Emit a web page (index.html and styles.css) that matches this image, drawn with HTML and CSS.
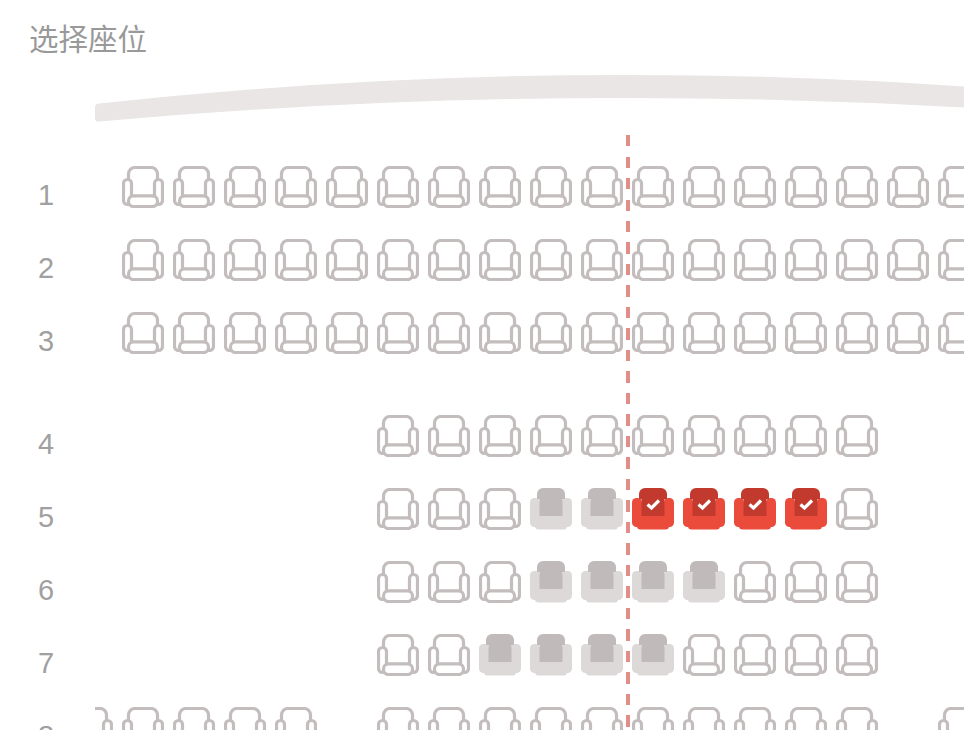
FILE: index.html
```html
<!DOCTYPE html>
<html lang="zh-CN">
<head>
  <meta charset="UTF-8" />
  <meta name="viewport" content="width=device-width, initial-scale=1.0" />
  <title>选择座位</title>
  <link rel="stylesheet" href="styles.css">
</head>
<body>
  <svg class="defs" xmlns="http://www.w3.org/2000/svg">
    <symbol id="free" viewBox="0 0 42 42">
      <g fill="#fff" stroke="#c3bdbd" stroke-width="3.200">
        <path d="M6.500 14V8a6.500 6.500 0 0 1 6.500-6.500h16a6.500 6.500 0 0 1 6.500 6.500v6" />
        <rect x="1.500" y="13.500" width="8" height="25" rx="4" />
        <rect x="32.500" y="13.500" width="8" height="25" rx="4" />
        <rect x="6.500" y="29.800" width="29" height="10.800" rx="5" />
      </g>
    </symbol>
    <symbol id="taken" viewBox="0 0 42 42">
      <rect x="0" y="10" width="10" height="29" rx="4.500" fill="#dcd9d8" />
      <rect x="32" y="10" width="10" height="29" rx="4.500" fill="#dcd9d8" />
      <rect x="5" y="28" width="32" height="13.500" rx="3.500" fill="#dcd9d8" />
      <path d="M7 11V6a6 6 0 0 1 6-6h16a6 6 0 0 1 6 6v5h-2.500v17h-23V11z" fill="#c0baba" />
    </symbol>
    <symbol id="picked" viewBox="0 0 42 42">
      <rect x="0" y="10" width="10" height="29" rx="4.500" fill="#ea4b3a" />
      <rect x="32" y="10" width="10" height="29" rx="4.500" fill="#ea4b3a" />
      <rect x="5" y="28" width="32" height="13.500" rx="3.500" fill="#ea4b3a" />
      <path d="M7 11V6a6 6 0 0 1 6-6h16a6 6 0 0 1 6 6v5h-2.500v17h-23V11z" fill="#c23a2d" />
      <path d="M15.500 16.500l4 3.500 7.500-7.500" fill="none" stroke="#fff" stroke-width="3.200" />
    </symbol>
  </svg>

  <h1 class="title">选择座位</h1>

  <svg class="screen" viewBox="95 74 869 50" xmlns="http://www.w3.org/2000/svg">
    <path d="M99 103.600Q628 46 1161 104V122Q628 74 99 121.600Q95 122 95 118V107.500Q95 104 99 103.600Z" fill="#e9e6e5" />
  </svg>

  <div class="map">
    <div class="aisle"></div>

    <div class="row">
      <div class="row-num">1</div>
      <div class="seats">
        <span class="blank"></span>
        <svg class="seat"><use href="#free" /></svg><svg class="seat"><use href="#free" /></svg><svg class="seat"><use href="#free" /></svg><svg class="seat"><use href="#free" /></svg><svg class="seat"><use href="#free" /></svg><svg class="seat"><use href="#free" /></svg><svg class="seat"><use href="#free" /></svg><svg class="seat"><use href="#free" /></svg><svg class="seat"><use href="#free" /></svg><svg class="seat"><use href="#free" /></svg><svg class="seat"><use href="#free" /></svg><svg class="seat"><use href="#free" /></svg><svg class="seat"><use href="#free" /></svg><svg class="seat"><use href="#free" /></svg><svg class="seat"><use href="#free" /></svg><svg class="seat"><use href="#free" /></svg><svg class="seat"><use href="#free" /></svg>
      </div>
    </div>

    <div class="row">
      <div class="row-num">2</div>
      <div class="seats">
        <span class="blank"></span>
        <svg class="seat"><use href="#free" /></svg><svg class="seat"><use href="#free" /></svg><svg class="seat"><use href="#free" /></svg><svg class="seat"><use href="#free" /></svg><svg class="seat"><use href="#free" /></svg><svg class="seat"><use href="#free" /></svg><svg class="seat"><use href="#free" /></svg><svg class="seat"><use href="#free" /></svg><svg class="seat"><use href="#free" /></svg><svg class="seat"><use href="#free" /></svg><svg class="seat"><use href="#free" /></svg><svg class="seat"><use href="#free" /></svg><svg class="seat"><use href="#free" /></svg><svg class="seat"><use href="#free" /></svg><svg class="seat"><use href="#free" /></svg><svg class="seat"><use href="#free" /></svg><svg class="seat"><use href="#free" /></svg>
      </div>
    </div>

    <div class="row">
      <div class="row-num">3</div>
      <div class="seats">
        <span class="blank"></span>
        <svg class="seat"><use href="#free" /></svg><svg class="seat"><use href="#free" /></svg><svg class="seat"><use href="#free" /></svg><svg class="seat"><use href="#free" /></svg><svg class="seat"><use href="#free" /></svg><svg class="seat"><use href="#free" /></svg><svg class="seat"><use href="#free" /></svg><svg class="seat"><use href="#free" /></svg><svg class="seat"><use href="#free" /></svg><svg class="seat"><use href="#free" /></svg><svg class="seat"><use href="#free" /></svg><svg class="seat"><use href="#free" /></svg><svg class="seat"><use href="#free" /></svg><svg class="seat"><use href="#free" /></svg><svg class="seat"><use href="#free" /></svg><svg class="seat"><use href="#free" /></svg><svg class="seat"><use href="#free" /></svg>
      </div>
    </div>

    <div class="row row-break">
      <div class="row-num">4</div>
      <div class="seats">
        <span class="blank"></span><span class="blank"></span><span class="blank"></span><span class="blank"></span><span class="blank"></span><span class="blank"></span>
        <svg class="seat"><use href="#free" /></svg><svg class="seat"><use href="#free" /></svg><svg class="seat"><use href="#free" /></svg><svg class="seat"><use href="#free" /></svg><svg class="seat"><use href="#free" /></svg><svg class="seat"><use href="#free" /></svg><svg class="seat"><use href="#free" /></svg><svg class="seat"><use href="#free" /></svg><svg class="seat"><use href="#free" /></svg><svg class="seat"><use href="#free" /></svg>
      </div>
    </div>

    <div class="row">
      <div class="row-num">5</div>
      <div class="seats">
        <span class="blank"></span><span class="blank"></span><span class="blank"></span><span class="blank"></span><span class="blank"></span><span class="blank"></span>
        <svg class="seat"><use href="#free" /></svg><svg class="seat"><use href="#free" /></svg><svg class="seat"><use href="#free" /></svg>
        <svg class="seat"><use href="#taken" /></svg><svg class="seat"><use href="#taken" /></svg>
        <svg class="seat"><use href="#picked" /></svg><svg class="seat"><use href="#picked" /></svg><svg class="seat"><use href="#picked" /></svg><svg class="seat"><use href="#picked" /></svg>
        <svg class="seat"><use href="#free" /></svg>
      </div>
    </div>

    <div class="row">
      <div class="row-num">6</div>
      <div class="seats">
        <span class="blank"></span><span class="blank"></span><span class="blank"></span><span class="blank"></span><span class="blank"></span><span class="blank"></span>
        <svg class="seat"><use href="#free" /></svg><svg class="seat"><use href="#free" /></svg><svg class="seat"><use href="#free" /></svg>
        <svg class="seat"><use href="#taken" /></svg><svg class="seat"><use href="#taken" /></svg><svg class="seat"><use href="#taken" /></svg><svg class="seat"><use href="#taken" /></svg>
        <svg class="seat"><use href="#free" /></svg><svg class="seat"><use href="#free" /></svg><svg class="seat"><use href="#free" /></svg>
      </div>
    </div>

    <div class="row">
      <div class="row-num">7</div>
      <div class="seats">
        <span class="blank"></span><span class="blank"></span><span class="blank"></span><span class="blank"></span><span class="blank"></span><span class="blank"></span>
        <svg class="seat"><use href="#free" /></svg><svg class="seat"><use href="#free" /></svg>
        <svg class="seat"><use href="#taken" /></svg><svg class="seat"><use href="#taken" /></svg><svg class="seat"><use href="#taken" /></svg><svg class="seat"><use href="#taken" /></svg>
        <svg class="seat"><use href="#free" /></svg><svg class="seat"><use href="#free" /></svg><svg class="seat"><use href="#free" /></svg><svg class="seat"><use href="#free" /></svg>
      </div>
    </div>

    <div class="row">
      <div class="row-num">8</div>
      <div class="seats">
        <svg class="seat"><use href="#free" /></svg><svg class="seat"><use href="#free" /></svg><svg class="seat"><use href="#free" /></svg><svg class="seat"><use href="#free" /></svg><svg class="seat"><use href="#free" /></svg>
        <span class="blank"></span>
        <svg class="seat"><use href="#free" /></svg><svg class="seat"><use href="#free" /></svg><svg class="seat"><use href="#free" /></svg><svg class="seat"><use href="#free" /></svg><svg class="seat"><use href="#free" /></svg><svg class="seat"><use href="#free" /></svg><svg class="seat"><use href="#free" /></svg><svg class="seat"><use href="#free" /></svg><svg class="seat"><use href="#free" /></svg><svg class="seat"><use href="#free" /></svg>
        <span class="blank"></span>
        <svg class="seat"><use href="#free" /></svg>
      </div>
    </div>
  </div>
</body>
</html>
```

FILE: styles.css
```css
html, body {
  margin: 0;
  height: 730px;
  overflow: hidden;
}
body {
  background-color: white;
  font-family: "Liberation Sans", "Noto Sans CJK SC", sans-serif;
}
.defs {
  display: block;
  width: 0;
  height: 0;
}
.title {
  margin: 0;
  padding-left: 29px;
  height: 74px;
  font-family: "Noto Sans CJK SC", sans-serif;
  font-size: 29.500px;
  font-weight: 400;
  line-height: 74px;
  color: #999;
}
.screen {
  display: block;
  margin-left: 95px;
  width: 869px;
  height: 50px;
}
.map {
  position: relative;
  margin-top: 42px;
}
.aisle {
  position: absolute;
  left: 626px;
  top: -31px;
  width: 4px;
  height: 600px;
  background: repeating-linear-gradient(to bottom, #e38d88 0, #e38d88 11px, transparent 11px, transparent 21.5px);
}
.row {
  display: flex;
  height: 73px;
}
.row-break {
  margin-top: 30px;
}
.row-num {
  flex: 0 0 95px;
  width: 95px;
  padding-left: 38px;
  box-sizing: border-box;
  font-size: 29px;
  line-height: 59px;
  color: #a0a0a0;
}
.seats {
  display: flex;
  flex: 1;
  gap: 9px;
  min-width: 0;
  overflow: hidden;
}
.seats > :first-child {
  margin-left: -24px;
}
.seat, .blank {
  flex: 0 0 42px;
  width: 42px;
  height: 42px;
}
```
